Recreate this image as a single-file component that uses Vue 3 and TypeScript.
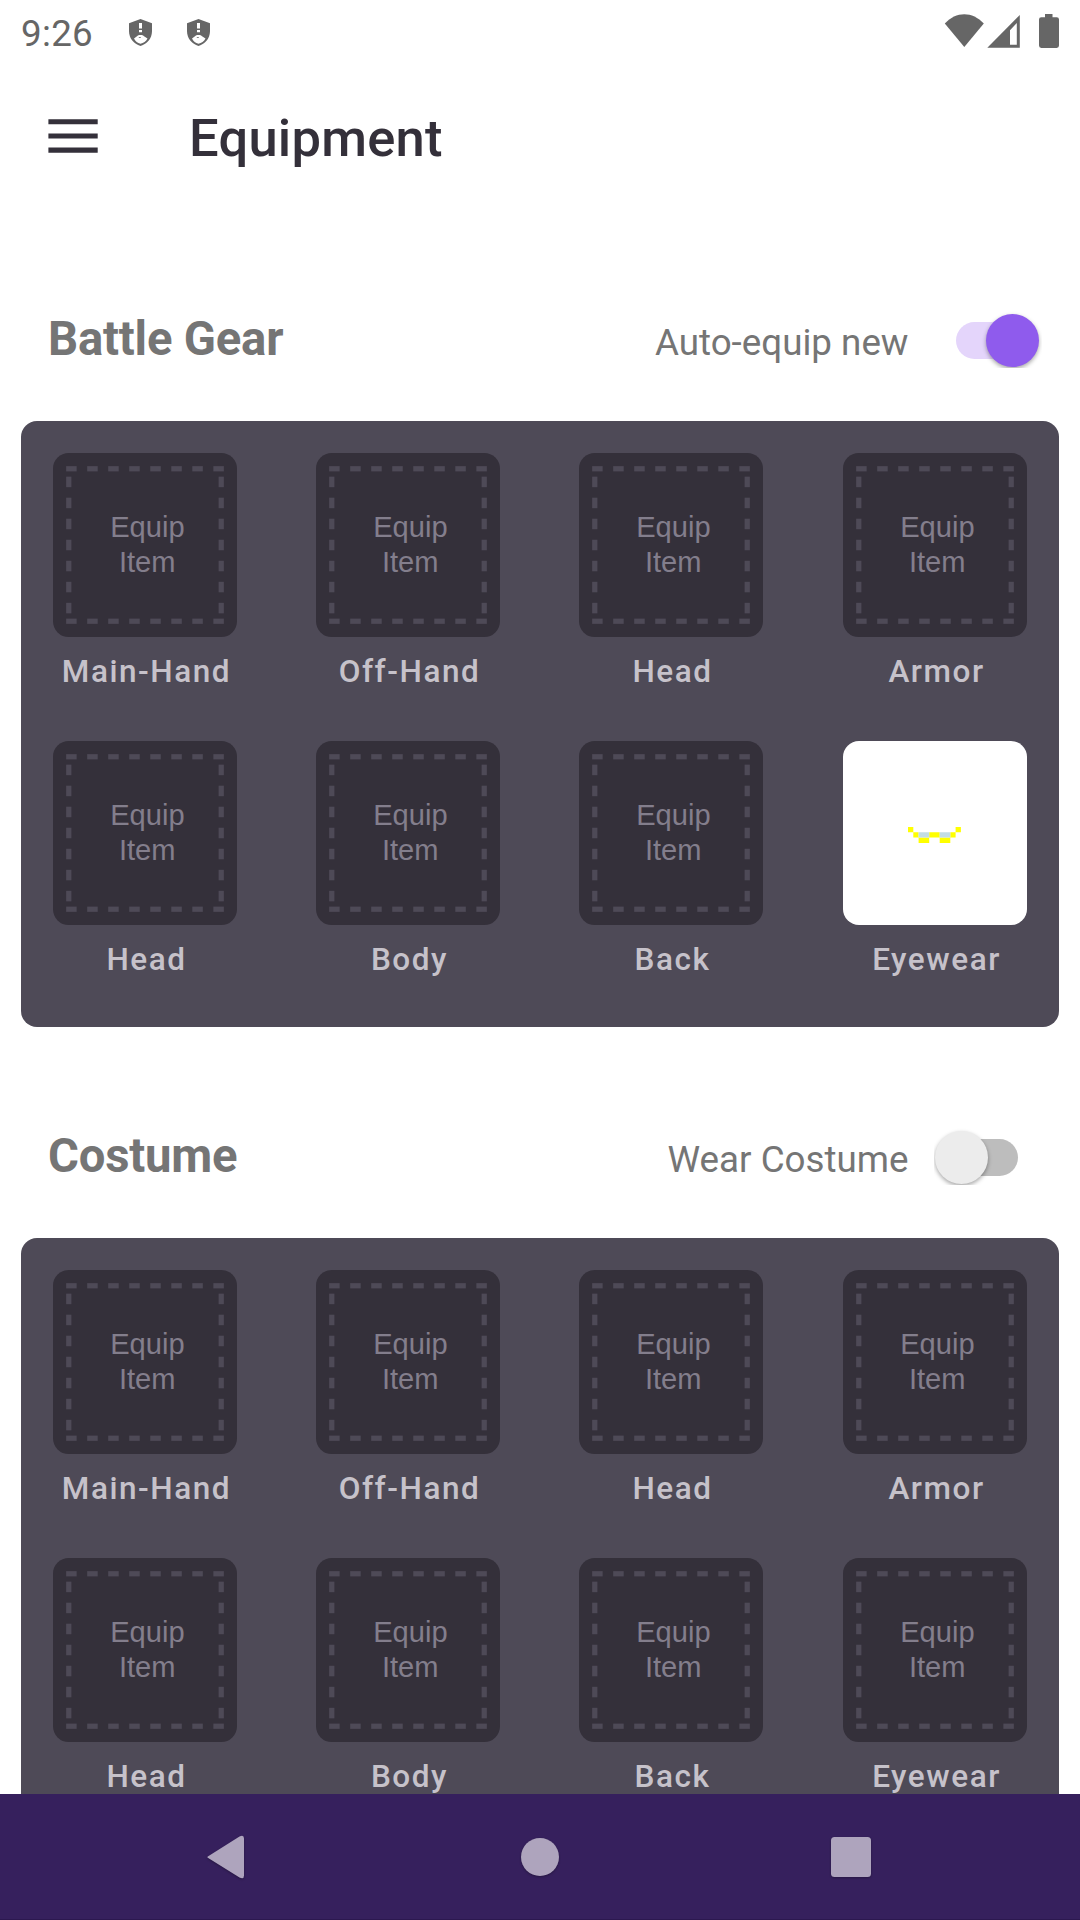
<script setup lang="ts">
interface Slot { label: string; item?: string }
interface Section { title: string; toggle: string; on: boolean; slots: Slot[] }

const names = ['Main-Hand', 'Off-Hand', 'Head', 'Armor', 'Head', 'Body', 'Back', 'Eyewear']
const sections: Section[] = [
  { title: 'Battle Gear', toggle: 'Auto-equip new', on: true, slots: names.map((label, i) => ({ label, item: i === 7 ? 'glasses' : undefined })) },
  { title: 'Costume', toggle: 'Wear Costume', on: false, slots: names.map((label) => ({ label })) },
]
const across = [0, 1, 2, 3, 4, 5, 6, 7].map((n) => 5 + n * 8)
const down = [0, 1, 2, 3, 4, 5, 6].map((n) => 9 + n * 8)
</script>

<template>
  <div class="screen">
    <div class="status">
      <span class="time">9:26</span>
      <svg v-for="n in 2" :key="n" class="shield" viewBox="0 0 23 27">
        <path fill="#666" d="M11.5 0 23 4.2V12c0 7.5-4.8 13-11.5 15C4.800 25 0 19.500 0 12V4.200z" />
        <path fill="#fff" d="M10 4h3v5.600h-3zM10 11h3v2.300h-3zM5 19.500 8 17.300C9 15.500 14 15.500 15 17.300L18.500 19.500C17 22.300 14.500 24.200 11.500 24.800 8.500 24.200 6.500 22.300 5 19.500z" />
        <path fill="#666" d="M9.800 18.200h2v.8h-2z" />
      </svg>
      <svg class="signals" viewBox="0 0 116 36">
        <g fill="#666">
          <path d="M.8 10.500C12-2 28.500-2 39.800 10.500L20.300 34z" />
          <path fill-rule="evenodd" d="M75.800 2v32.700H43.300zM66 17.200v14.500h6.800V10z" />
          <path d="M101 1h7.500v3.300h4.200q2.300 0 2.300 2.300v26q0 2.300-2.300 2.300H97.300Q95 34.900 95 32.600v-26q0-2.300 2.300-2.300h3.700z" />
        </g>
      </svg>
    </div>
    <header class="bar">
      <svg class="menu" viewBox="0 0 50 35"><path fill="#34303a" d="M.4 .2h49.300v5.100H.4zM.4 14.400h49.300v5.100H.4zM.4 28.600h49.300v5.100H.4z" /></svg>
      <h1>Equipment</h1>
    </header>
    <main>
      <section v-for="s in sections" :key="s.title">
        <div class="head">
          <h2>{{ s.title }}</h2>
          <span class="toggle">{{ s.toggle }}</span>
          <div class="switch" :class="{ on: s.on }"><i class="track"></i><i class="thumb"></i></div>
        </div>
        <div class="panel">
          <div v-for="(slot, i) in s.slots" :key="i" class="slot">
            <svg v-if="slot.item" class="tile" viewBox="0 0 184 184">
              <rect width="184" height="184" rx="16" fill="#fff" />
              <path fill="#ff0" d="M65 86h5.300v5.300H65zM112.600 86h5.300v5.300h-5.300zM70.300 91.300h5.300v5.300h-5.300zM107.300 91.300h5.300v5.300h-5.300zM86.200 91.300h10.500v5.300H86.200zM75.600 96.600h10.600v5.300H75.600zM96.700 96.600h10.600v5.300H96.700z" />
              <path fill="#c3dde4" d="M75.600 91.300h10.600v5.300H75.600zM96.700 91.300h10.600v5.300H96.700z" />
            </svg>
            <svg v-else class="tile" viewBox="0 0 70 70">
              <rect width="70" height="70" rx="6" fill="#34303a" />
              <g fill="#4e4a57">
                <rect v-for="x in across" :key="'t' + x" :x="x" y="5" width="4" height="2" />
                <rect v-for="x in across" :key="'b' + x" :x="x" y="63" width="4" height="2" />
                <rect v-for="y in down" :key="'l' + y" x="5" :y="y" width="2" height="4" />
                <rect v-for="y in down" :key="'r' + y" x="63" :y="y" width="2" height="4" />
              </g>
              <g class="hint" text-anchor="middle">
                <text x="35.900" y="32.100">Equip</text>
                <text x="35.850" y="45.100">Item</text>
              </g>
            </svg>
            <span class="label">{{ slot.label }}</span>
          </div>
        </div>
      </section>
    </main>
    <nav class="nav">
      <svg viewBox="0 0 1080 126">
        <g fill="#aea4bd">
          <path d="M208.200 46.300 239.500 26.400q4.500-2.200 4.500 2v37.200q0 4.200-4.500 2L208.200 47.900q-1.800-.8 0-1.600z" transform="translate(0 16)" />
          <circle cx="540" cy="63" r="19" />
          <rect x="831" y="43" width="40" height="40" rx="3.500" />
        </g>
      </svg>
    </nav>
  </div>
</template>

<style>
body { margin: 0; background: #fff; }
</style>

<style scoped>
.screen { width: 1080px; height: 1920px; display: flex; flex-direction: column; overflow: hidden; background: #fff; font-family: Roboto, sans-serif; }
.status { height: 63px; display: flex; align-items: flex-start; box-sizing: border-box; padding: 13px 20px 0 21px; flex: none; }
.time { width: 107.500px; padding-top: 1px; font-size: 36.750px; line-height: 40px; letter-spacing: .3px; color: #666; }
.shield { width: 23px; height: 27px; margin: 6px 35px 0 0; }
.signals { width: 116px; height: 36px; margin-left: auto; }
.bar { height: 147px; display: flex; align-items: center; flex: none; padding-left: 48px; box-sizing: border-box; }
.menu { width: 50px; height: 35px; }
h1 { margin: 2px 0 0 91px; font-size: 52.500px; line-height: 62px; font-weight: 500; letter-spacing: .25px; color: #34303a; }
main { flex: 1; min-height: 0; overflow: hidden; padding: 0 21px; }
section { height: 817px; }
.head { height: 211px; display: flex; align-items: flex-start; box-sizing: border-box; padding: 100px 17px 0 27px; }
h2 { margin: 1px 0 0; font-size: 47.250px; line-height: 56px; font-weight: 700; letter-spacing: -.2px; color: #757575; }
.toggle { margin-left: auto; margin-right: 25.500px; padding-top: 11px; font-size: 36.750px; line-height: 44px; color: #757575; }
.switch { width: 108px; height: 58px; position: relative; overflow: hidden; }
.track { position: absolute; left: 19px; top: 12px; width: 65px; height: 37px; border-radius: 19px; background: #bdbdbd; }
.thumb { position: absolute; left: 1px; top: 4px; width: 53px; height: 53px; border-radius: 50%; background: #ececec; box-shadow: 0 2px 4px rgba(0,0,0,.35); }
.on .track { left: 22px; background: #e4d5fb; }
.on .thumb { background: #8f5bed; left: 52px; }
.panel { height: 606px; box-sizing: border-box; padding: 32px 32px 0; border-radius: 16px; background: #4e4a57; display: grid; grid-template-columns: 263px 263px 264px 184px; grid-auto-rows: 288px; }
.slot { width: 184px; display: flex; flex-direction: column; align-items: center; }
.tile { width: 184px; height: 184px; display: block; }
.hint { font: 11.080px "Liberation Sans", sans-serif; fill: #837e8c; }
.label { margin-top: 16px; padding-left: 3px; font-size: 31.500px; line-height: 38px; font-weight: 500; color: #c6c2ca; letter-spacing: 1.550px; white-space: nowrap; }
.nav { height: 126px; flex: none; background: #36205d; box-shadow: inset 0 -1px #2c184f; }
.nav svg { width: 1080px; height: 126px; display: block; filter: drop-shadow(0 1px 1px rgba(0,0,0,.3)); }
</style>
